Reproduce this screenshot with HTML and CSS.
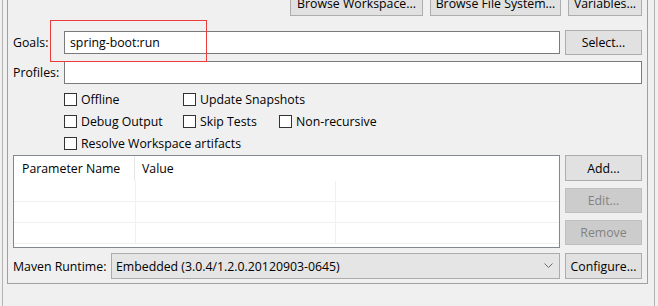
FILE: index.html
```html
<!DOCTYPE html>
<html lang="en">
<head>
    <meta charset="UTF-8">
    <title>Maven Launch Configuration</title>
    <link rel="stylesheet" href="styles.css">
</head>
<body>
    <div class="frame">
        <div class="group">
            <!-- Base directory buttons (row above is cut off) -->
            <div class="browse-row">
                <button class="btn browse-ws">Browse Workspace...</button>
                <button class="btn browse-fs">Browse File System...</button>
                <button class="btn variables">Variables...</button>
            </div>

            <!-- Goals -->
            <div class="field-row goals-row">
                <label class="field-label">Goals:</label>
                <div class="text-input goals-input">spring-boot:run</div>
                <button class="btn side-btn">Select...</button>
            </div>

            <!-- Profiles -->
            <div class="field-row profiles-row">
                <label class="field-label">Profiles:</label>
                <div class="text-input profiles-input"></div>
            </div>

            <!-- Options -->
            <div class="options">
                <div class="option"><span class="check"></span>Offline</div>
                <div class="option"><span class="check"></span>Update Snapshots</div>
                <div class="option"></div>
                <div class="option"><span class="check"></span>Debug Output</div>
                <div class="option"><span class="check"></span>Skip Tests</div>
                <div class="option"><span class="check"></span>Non-recursive</div>
                <div class="option wide"><span class="check"></span>Resolve Workspace artifacts</div>
            </div>

            <!-- Parameters -->
            <div class="params">
                <div class="param-table">
                    <div class="param-head">
                        <div class="col-name">Parameter Name</div>
                        <div class="col-value">Value</div>
                    </div>
                    <div class="param-row"><div class="cell-name"></div><div class="cell-value"></div><div class="cell-rest"></div></div>
                    <div class="param-row"><div class="cell-name"></div><div class="cell-value"></div><div class="cell-rest"></div></div>
                    <div class="param-row"><div class="cell-name"></div><div class="cell-value"></div><div class="cell-rest"></div></div>
                </div>
                <div class="param-buttons">
                    <button class="btn side-btn add-btn">Add...</button>
                    <button class="btn side-btn" disabled>Edit...</button>
                    <button class="btn side-btn" disabled>Remove</button>
                </div>
            </div>

            <!-- Runtime -->
            <div class="runtime-row">
                <label class="runtime-label">Maven Runtime:</label>
                <div class="combo">
                    <span>Embedded (3.0.4/1.2.0.20120903-0645)</span>
                    <svg class="chevron" width="9" height="6" viewBox="0 0 9 6">
                        <polyline points="0.5,0.5 4.5,4.5 8.5,0.5" fill="none" stroke="#6d6d6d" stroke-width="1"/>
                    </svg>
                </div>
                <button class="btn side-btn">Configure...</button>
            </div>
        </div>

        <!-- highlight -->
        <div class="highlight"></div>
    </div>
</body>
</html>
```

FILE: styles.css
```css
/* Global */
body {
    margin: 0;
    background: #f0f0f0;
    font-family: 'Open Sans', 'Noto Sans CJK SC', sans-serif;
    font-size: 12.3px;
    color: #000;
    overflow: hidden;
}

.frame {
    position: relative;
    display: flow-root;
    box-sizing: border-box;
    margin-left: 2px;
    width: 653px;
    height: 306px;
    border-left: 1px solid #b4b4b4;
    border-right: 1px solid #b4b4b4;
    padding-left: 4px;
}

.group {
    display: flow-root;
    box-sizing: border-box;
    width: 641px;
    height: 284px;
    border: 1px solid #a0a0a0;
    border-top: none;
    padding: 0 5px;
}

/* Buttons */
.btn {
    box-sizing: border-box;
    height: 25px;
    margin: 0;
    padding: 0;
    background: #e1e1e1;
    border: 1px solid #adadad;
    font: inherit;
    color: #000;
    white-space: nowrap;
}

.btn:disabled {
    background: #cccccc;
    border-color: #bfbfbf;
    color: #838383;
}

.browse-row {
    display: flex;
    justify-content: flex-end;
    gap: 7px;
    margin-top: -10px;
}

.browse-row .btn {
    height: 26px;
}

.browse-ws { width: 133px; }
.browse-fs { width: 131px; }
.variables { width: 74px; }

.side-btn {
    width: 77px;
    flex: none;
}

/* Text fields */
.field-row {
    display: flex;
    align-items: center;
}

.goals-row {
    margin-top: 14px;
    height: 25px;
}

.profiles-row {
    margin-top: 6px;
    height: 23px;
}

.field-label {
    width: 51px;
    flex: none;
}

.text-input {
    box-sizing: border-box;
    height: 23px;
    background: #fff;
    border: 1px solid #7a7a7a;
    padding: 0 5px;
    line-height: 21px;
}

.goals-input {
    width: 496px;
    margin-right: 5px;
}

.profiles-input {
    width: 579px;
}

/* Options */
.options {
    display: grid;
    grid-template-columns: 119px 96px auto;
    grid-auto-rows: 22px;
    margin-top: 4px;
    padding-left: 51px;
}

.option {
    display: flex;
    align-items: center;
    white-space: nowrap;
}

.option.wide {
    grid-column: 1 / 4;
}

.check {
    flex: none;
    box-sizing: border-box;
    width: 13px;
    height: 13px;
    border: 1px solid #333;
    background: #fff;
    margin-right: 4px;
}

/* Parameter table */
.params {
    display: flex;
    gap: 5px;
    margin-top: 1px;
}

.param-table {
    box-sizing: border-box;
    width: 547px;
    height: 93px;
    background: #fff;
    border: 1px solid #828790;
}

.param-head {
    display: flex;
    height: 25px;
    line-height: 25px;
}

.col-name {
    box-sizing: border-box;
    width: 121px;
    padding-left: 8px;
    border-right: 1px solid #e5e5e5;
}

.col-value {
    padding-left: 7px;
}

.param-row {
    display: flex;
    height: 21px;
    box-sizing: border-box;
    border-bottom: 1px solid #f0f0f0;
}

.cell-name {
    width: 121px;
    border-right: 1px solid #edf1f8;
}

.cell-value {
    width: 199px;
    border-right: 1px solid #edf1f8;
}

.param-buttons {
    display: flex;
    flex-direction: column;
    gap: 7px;
}

.add-btn {
    height: 26px;
}

/* Runtime */
.runtime-row {
    display: flex;
    align-items: center;
    gap: 5px;
    margin-top: 5px;
}

.runtime-row .btn {
    height: 26px;
}

.runtime-label {
    flex: none;
    width: 93px;
    white-space: nowrap;
}

.combo {
    box-sizing: border-box;
    display: flex;
    align-items: center;
    justify-content: space-between;
    flex: none;
    width: 449px;
    height: 26px;
    background: #e5e5e5;
    border: 1px solid #acacac;
    padding: 0 6px 0 4px;
}

.chevron {
    display: block;
}

/* Red highlight */
.highlight {
    position: absolute;
    left: 47px;
    top: 20px;
    width: 155px;
    height: 40px;
    border: 1px solid #eb3c3c;
}
```
